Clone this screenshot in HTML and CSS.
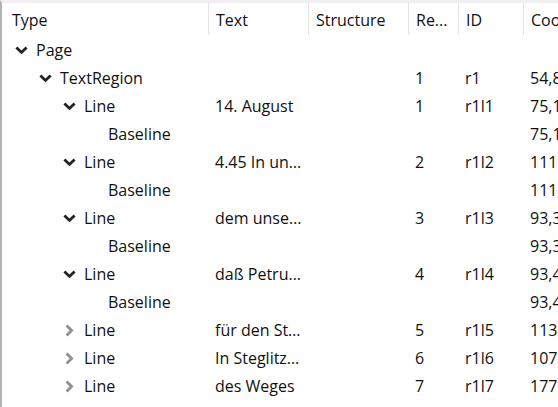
FILE: index.html
```html
<!DOCTYPE html>
<html lang="en">
<head>
    <meta charset="UTF-8">
    <title>Page Structure</title>
    <link rel="stylesheet" href="styles.css">
</head>
<body>

    <div class="tree-view">
        <div class="header">
            <div class="col col-type">Type</div>
            <div class="col col-text">Text</div>
            <div class="col col-struct">Structure</div>
            <div class="col col-order">Re...</div>
            <div class="col col-id">ID</div>
            <div class="col col-coords">Coords</div>
        </div>

        <div class="row">
            <div class="col col-type level-0"><span class="toggle open"></span>Page</div>
            <div class="col col-text"></div>
            <div class="col col-struct"></div>
            <div class="col col-order"></div>
            <div class="col col-id"></div>
            <div class="col col-coords"></div>
        </div>
        <div class="row">
            <div class="col col-type level-1"><span class="toggle open"></span>TextRegion</div>
            <div class="col col-text"></div>
            <div class="col col-struct"></div>
            <div class="col col-order">1</div>
            <div class="col col-id">r1</div>
            <div class="col col-coords">54,86 1464,86 1464,1961 54,1961</div>
        </div>
        <div class="row">
            <div class="col col-type level-2"><span class="toggle open"></span>Line</div>
            <div class="col col-text">14. August</div>
            <div class="col col-struct"></div>
            <div class="col col-order">1</div>
            <div class="col col-id">r1l1</div>
            <div class="col col-coords">75,112 412,112 412,170 75,170</div>
        </div>
        <div class="row">
            <div class="col col-type level-3"><span class="toggle"></span>Baseline</div>
            <div class="col col-text"></div>
            <div class="col col-struct"></div>
            <div class="col col-order"></div>
            <div class="col col-id"></div>
            <div class="col col-coords">75,160 412,158</div>
        </div>
        <div class="row">
            <div class="col col-type level-2"><span class="toggle open"></span>Line</div>
            <div class="col col-text">4.45 In un…</div>
            <div class="col col-struct"></div>
            <div class="col col-order">2</div>
            <div class="col col-id">r1l2</div>
            <div class="col col-coords">111,190 1440,190 1440,252 111,252</div>
        </div>
        <div class="row">
            <div class="col col-type level-3"><span class="toggle"></span>Baseline</div>
            <div class="col col-text"></div>
            <div class="col col-struct"></div>
            <div class="col col-order"></div>
            <div class="col col-id"></div>
            <div class="col col-coords">111,240 1440,236</div>
        </div>
        <div class="row">
            <div class="col col-type level-2"><span class="toggle open"></span>Line</div>
            <div class="col col-text">dem unse…</div>
            <div class="col col-struct"></div>
            <div class="col col-order">3</div>
            <div class="col col-id">r1l3</div>
            <div class="col col-coords">93,318 1446,318 1446,380 93,380</div>
        </div>
        <div class="row">
            <div class="col col-type level-3"><span class="toggle"></span>Baseline</div>
            <div class="col col-text"></div>
            <div class="col col-struct"></div>
            <div class="col col-order"></div>
            <div class="col col-id"></div>
            <div class="col col-coords">93,368 1446,364</div>
        </div>
        <div class="row">
            <div class="col col-type level-2"><span class="toggle open"></span>Line</div>
            <div class="col col-text">daß Petru…</div>
            <div class="col col-struct"></div>
            <div class="col col-order">4</div>
            <div class="col col-id">r1l4</div>
            <div class="col col-coords">93,404 1450,404 1450,466 93,466</div>
        </div>
        <div class="row">
            <div class="col col-type level-3"><span class="toggle"></span>Baseline</div>
            <div class="col col-text"></div>
            <div class="col col-struct"></div>
            <div class="col col-order"></div>
            <div class="col col-id"></div>
            <div class="col col-coords">93,454 1450,450</div>
        </div>
        <div class="row">
            <div class="col col-type level-2"><span class="toggle closed"></span>Line</div>
            <div class="col col-text">für den St…</div>
            <div class="col col-struct"></div>
            <div class="col col-order">5</div>
            <div class="col col-id">r1l5</div>
            <div class="col col-coords">113,490 1452,490 1452,552 113,552</div>
        </div>
        <div class="row">
            <div class="col col-type level-2"><span class="toggle closed"></span>Line</div>
            <div class="col col-text">In Steglitz…</div>
            <div class="col col-struct"></div>
            <div class="col col-order">6</div>
            <div class="col col-id">r1l6</div>
            <div class="col col-coords">107,576 1448,576 1448,638 107,638</div>
        </div>
        <div class="row">
            <div class="col col-type level-2"><span class="toggle closed"></span>Line</div>
            <div class="col col-text">des Weges</div>
            <div class="col col-struct"></div>
            <div class="col col-order">7</div>
            <div class="col col-id">r1l7</div>
            <div class="col col-coords">177,662 720,662 720,724 177,724</div>
        </div>
        <div class="row">
            <div class="col col-type level-2"><span class="toggle closed"></span>Line</div>
            <div class="col col-text">durch die …</div>
            <div class="col col-struct"></div>
            <div class="col col-order">8</div>
            <div class="col col-id">r1l8</div>
            <div class="col col-coords">96,748 1444,748 1444,810 96,810</div>
        </div>
    </div>

</body>
</html>
```

FILE: styles.css
```css
/* Tree table */
body {
    margin: 0;
    font-family: "Open Sans", "Noto Sans", sans-serif;
    font-size: 16px;
    color: #111;
    background-color: white;
    overflow: hidden;
}

.tree-view {
    width: 556px;
    height: 404px;
    border-top: 3px solid #f0f0f0;
    border-left: 2px solid #b4b4b4;
    overflow: hidden;
}

.header,
.row {
    display: flex;
    white-space: nowrap;
    box-sizing: border-box;
}

.header {
    height: 32px;
}

.row {
    height: 28px;
    padding-top: 2px;
    align-items: center;
}

.col {
    flex: none;
    overflow: hidden;
    padding-left: 7px;
    box-sizing: border-box;
}

.header .col {
    height: 32px;
    padding-top: 1px;
    line-height: 32px;
    border-left: 1px solid #e5e5e5;
}

.header .col-type {
    border-left: none;
    padding-left: 10px;
}

.col-type { width: 206px; display: flex; align-items: center; }
.col-text { width: 100px; }
.col-struct { width: 100px; }
.col-order { width: 50px; }
.col-id { width: 65px; }
.col-coords { width: 120px; }

.level-0 { padding-left: 11px; }
.level-1 { padding-left: 35px; }
.level-2 { padding-left: 59px; }
.level-3 { padding-left: 83px; }

/* Expand / collapse arrows */
.toggle {
    display: inline-block;
    width: 23px;
    height: 14px;
    flex: none;
    background-repeat: no-repeat;
    background-position: 2px center;
}

.toggle.open {
    background-image: url("data:image/svg+xml,%3Csvg xmlns='http://www.w3.org/2000/svg' width='13' height='9'%3E%3Cpath d='M1.4 1.4 L6.5 6.4 L11.6 1.4' fill='none' stroke='%23222' stroke-width='2.8'/%3E%3C/svg%3E");
}

.toggle.closed {
    background-image: url("data:image/svg+xml,%3Csvg xmlns='http://www.w3.org/2000/svg' width='9' height='13'%3E%3Cpath d='M1.6 1.4 L6.6 6.5 L1.6 11.6' fill='none' stroke='%23909090' stroke-width='2.8'/%3E%3C/svg%3E");
    background-position: 4px center;
}
```
